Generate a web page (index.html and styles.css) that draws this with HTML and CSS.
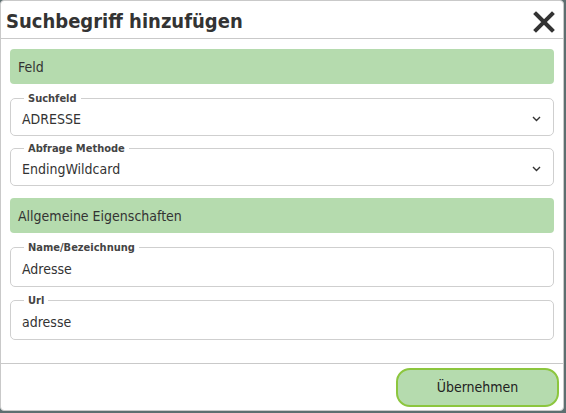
FILE: index.html
```html
<!DOCTYPE html>
<html lang="de">
<head>
<meta charset="utf-8">
<title>Suchbegriff hinzufügen</title>
<link rel="stylesheet" href="styles.css">
</head>
<body>
<div class="dialog">
  <div class="dialog-header">
    <h1 class="dialog-title">Suchbegriff hinzufügen</h1>
    <button class="close-btn" aria-label="Schließen">
      <svg width="22" height="22" viewBox="0 0 22 22"><path d="M3 3 L19 19 M19 3 L3 19" stroke="#333" stroke-width="4" stroke-linecap="square" fill="none"/></svg>
    </button>
  </div>
  <div class="dialog-body">
    <div class="section">Feld</div>
    <fieldset class="field">
      <legend>Suchfeld</legend>
      <div class="field-value">
        <span>ADRESSE</span>
        <svg class="chevron" width="9" height="6" viewBox="0 0 9 6"><path d="M1 1 L4.5 4.5 L8 1" stroke="#333" stroke-width="1.4" fill="none"/></svg>
      </div>
    </fieldset>
    <fieldset class="field">
      <legend>Abfrage Methode</legend>
      <div class="field-value">
        <span>EndingWildcard</span>
        <svg class="chevron" width="9" height="6" viewBox="0 0 9 6"><path d="M1 1 L4.5 4.5 L8 1" stroke="#333" stroke-width="1.4" fill="none"/></svg>
      </div>
    </fieldset>
    <div class="section section-next">Allgemeine Eigenschaften</div>
    <fieldset class="field field-input">
      <legend>Name/Bezeichnung</legend>
      <div class="field-value"><span>Adresse</span></div>
    </fieldset>
    <fieldset class="field field-input">
      <legend>Url</legend>
      <div class="field-value"><span>adresse</span></div>
    </fieldset>
  </div>
  <div class="dialog-footer">
    <button class="primary-btn">Übernehmen</button>
  </div>
</div>
</body>
</html>
```
FILE: styles.css
```css
html, body {
  margin: 0;
  padding: 0;
}
body {
  background: #5d6f70;
  width: 566px;
  height: 413px;
  overflow: hidden;
  font-family: "DejaVu Sans Condensed", "DejaVu Sans", sans-serif;
  color: #333;
}
.dialog {
  box-sizing: border-box;
  width: 564px;
  height: 411px;
  background: #fff;
  border: 1px solid #c9c9c9;
  border-radius: 4px;
  display: flex;
  flex-direction: column;
}
.dialog-header {
  height: 37px;
  display: flex;
  align-items: center;
  justify-content: space-between;
  padding: 0 7px 0 5px;
  border-bottom: 1px solid #c9c9c9;
}
.dialog-title {
  margin: 0;
  font-size: 20px;
  font-weight: bold;
  color: #333;
  padding-top: 3px;
}
.close-btn {
  border: 0;
  background: none;
  padding: 0;
  width: 24px;
  height: 24px;
  display: flex;
  align-items: center;
  justify-content: center;
  margin-top: 4px;
}
.dialog-body {
  flex: 1;
  padding: 10px 9px 0 9px;
  display: flex;
  flex-direction: column;
}
.section {
  background: #b5dbae;
  border-radius: 4px;
  height: 35px;
  display: flex;
  align-items: center;
  padding-left: 8px;
  font-size: 14px;
  color: #333;
  margin-bottom: 8px;
}
.section-next {
  margin-top: 6px;
}
.field {
  margin: 0 0 6px 0;
  padding: 0 12px 0 11px;
  border: 1px solid #cfcfcf;
  border-radius: 5px;
  min-width: 0;
}
.field legend {
  font-size: 11px;
  font-weight: bold;
  color: #444;
  padding: 0 4px 0 4px;
  margin-left: 2px;
  line-height: 13px;
}
.field-value {
  height: 30px;
  display: flex;
  align-items: center;
  justify-content: space-between;
  font-size: 14px;
  color: #333;
  padding-bottom: 2px;
  box-sizing: border-box;
}
.field-input {
  margin-bottom: 7px;
}
.field-input .field-value {
  height: 32px;
}
.dialog-footer {
  border-top: 1px solid #c9c9c9;
  height: 46px;
  display: flex;
  align-items: center;
  justify-content: flex-end;
  padding-right: 4px;
}
.primary-btn {
  width: 163px;
  height: 39px;
  box-sizing: border-box;
  border: 2px solid #8cc63e;
  border-radius: 14px;
  background: #b5dbae;
  font-family: inherit;
  font-size: 14px;
  color: #222;
}
```
